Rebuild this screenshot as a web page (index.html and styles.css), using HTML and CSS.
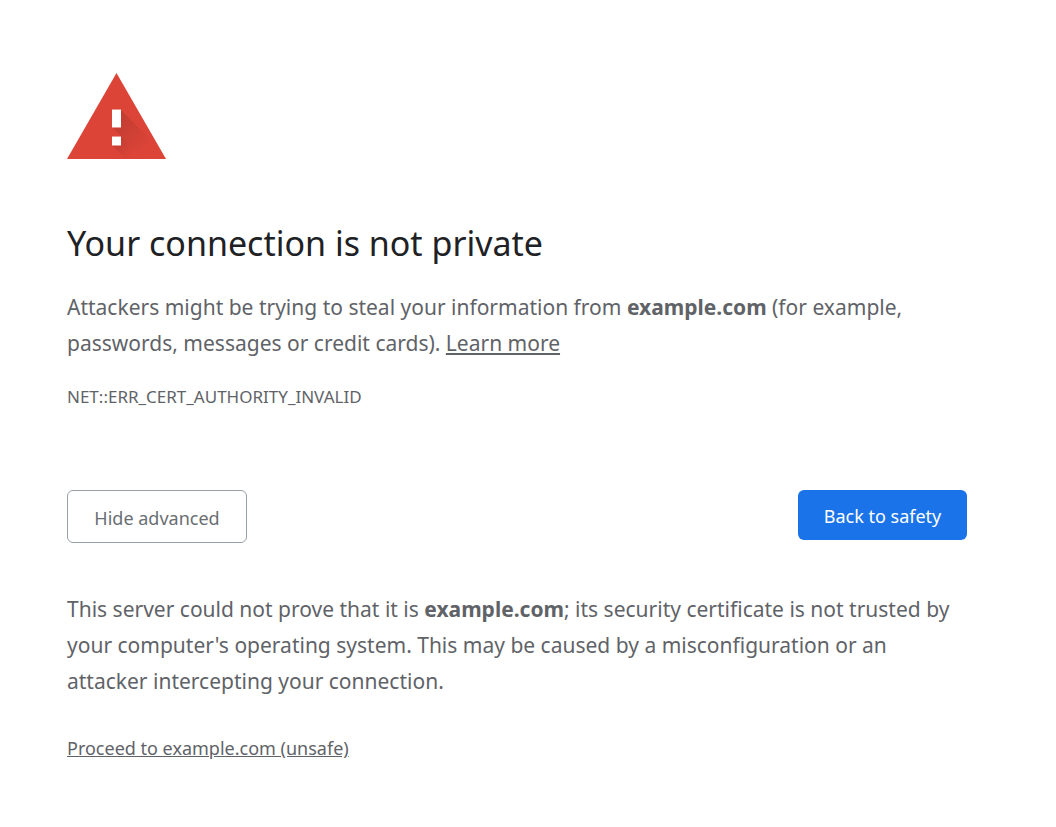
FILE: index.html
```html
<!DOCTYPE html>
<html lang="en">
<head>
  <meta charset="utf-8">
  <meta name="viewport" content="width=device-width, initial-scale=1">
  <title>Privacy error</title>
  <link rel="stylesheet" href="styles.css">
</head>
<body>
  <main class="interstitial">
    <svg class="icon" viewBox="0 0 99 86" aria-hidden="true">
      <defs>
        <linearGradient id="shadow" gradientUnits="userSpaceOnUse" x1="44" y1="45" x2="76" y2="77">
          <stop offset="0" stop-color="#bf3b31"/>
          <stop offset="1" stop-color="#db4437"/>
        </linearGradient>
        <linearGradient id="dot-shadow" gradientUnits="userSpaceOnUse" x1="47" y1="66" x2="63" y2="82">
          <stop offset="0" stop-color="#bf3b31"/>
          <stop offset="1" stop-color="#db4437"/>
        </linearGradient>
      </defs>
      <path fill="#db4437" d="M49.500 0L99 86H0z"/>
      <path fill="url(#shadow)" d="M54 37L84 67 95 86H77L45 54h9z"/>
      <path fill="url(#dot-shadow)" d="M54 63L77 86H59L45 72h9z"/>
      <path fill="#fff" d="M45 37h9v17h-9zM45 64h9v8h-9z"/>
      <path fill="#e79a92" d="M45 36h9v1h-9zM45 54h9v1h-9zM45 63h9v1h-9zM45 72h9v1h-9z"/>
    </svg>

    <h1>Your connection is not private</h1>
    <p>Attackers might be trying to steal your information from <strong>example.com</strong> (for example, passwords, messages or credit cards). <a href="#">Learn more</a></p>
    <div class="error-code">NET::ERR_CERT_AUTHORITY_INVALID</div>

    <div class="nav-buttons">
      <button type="button" class="secondary-button">Hide advanced</button>
      <button type="button" class="primary-button">Back to safety</button>
    </div>

    <div class="details">
      <p>This server could not prove that it is <strong>example.com</strong>; its security certificate is not trusted by your computer's operating system. This may be caused by a misconfiguration or an attacker intercepting your connection.</p>
      <a href="#" class="proceed-link">Proceed to example.com (unsafe)</a>
    </div>
  </main>
</body>
</html>
```

FILE: styles.css
```css
body {
  margin: 0;
  background: #fff;
  color: #5f6368;
  font-family: "Noto Sans", sans-serif;
  font-size: 21px;
  line-height: 36px;
}
.interstitial {
  max-width: 900px;
  margin: 0 auto;
  padding: 73px 89px 60px 67px;
}
.icon {
  display: block;
  width: 99px;
  height: 86px;
}
h1 {
  margin: 59px 0 21px;
  color: #202124;
  font-size: 34px;
  font-weight: 400;
  line-height: 50px;
}
p {
  margin: 0;
}
a {
  color: inherit;
}
.error-code {
  margin-top: 18px;
  font-size: 17px;
  line-height: 36px;
}
.nav-buttons {
  display: flex;
  justify-content: space-between;
  align-items: flex-start;
  margin-top: 75px;
}
button {
  padding: 2px 24px 0;
  border-radius: 6px;
  font-family: inherit;
  font-size: 18px;
  cursor: pointer;
}
.secondary-button {
  min-width: 180px;
  height: 53px;
  border: 1px solid #9aa0a6;
  background: #fff;
  color: #696e72;
}
.primary-button {
  min-width: 169px;
  height: 50px;
  border: none;
  background: #1a73e8;
  color: #fff;
}
.details {
  margin-top: 48px;
}
.proceed-link {
  display: inline-block;
  margin-top: 31px;
  font-size: 18px;
}
```
